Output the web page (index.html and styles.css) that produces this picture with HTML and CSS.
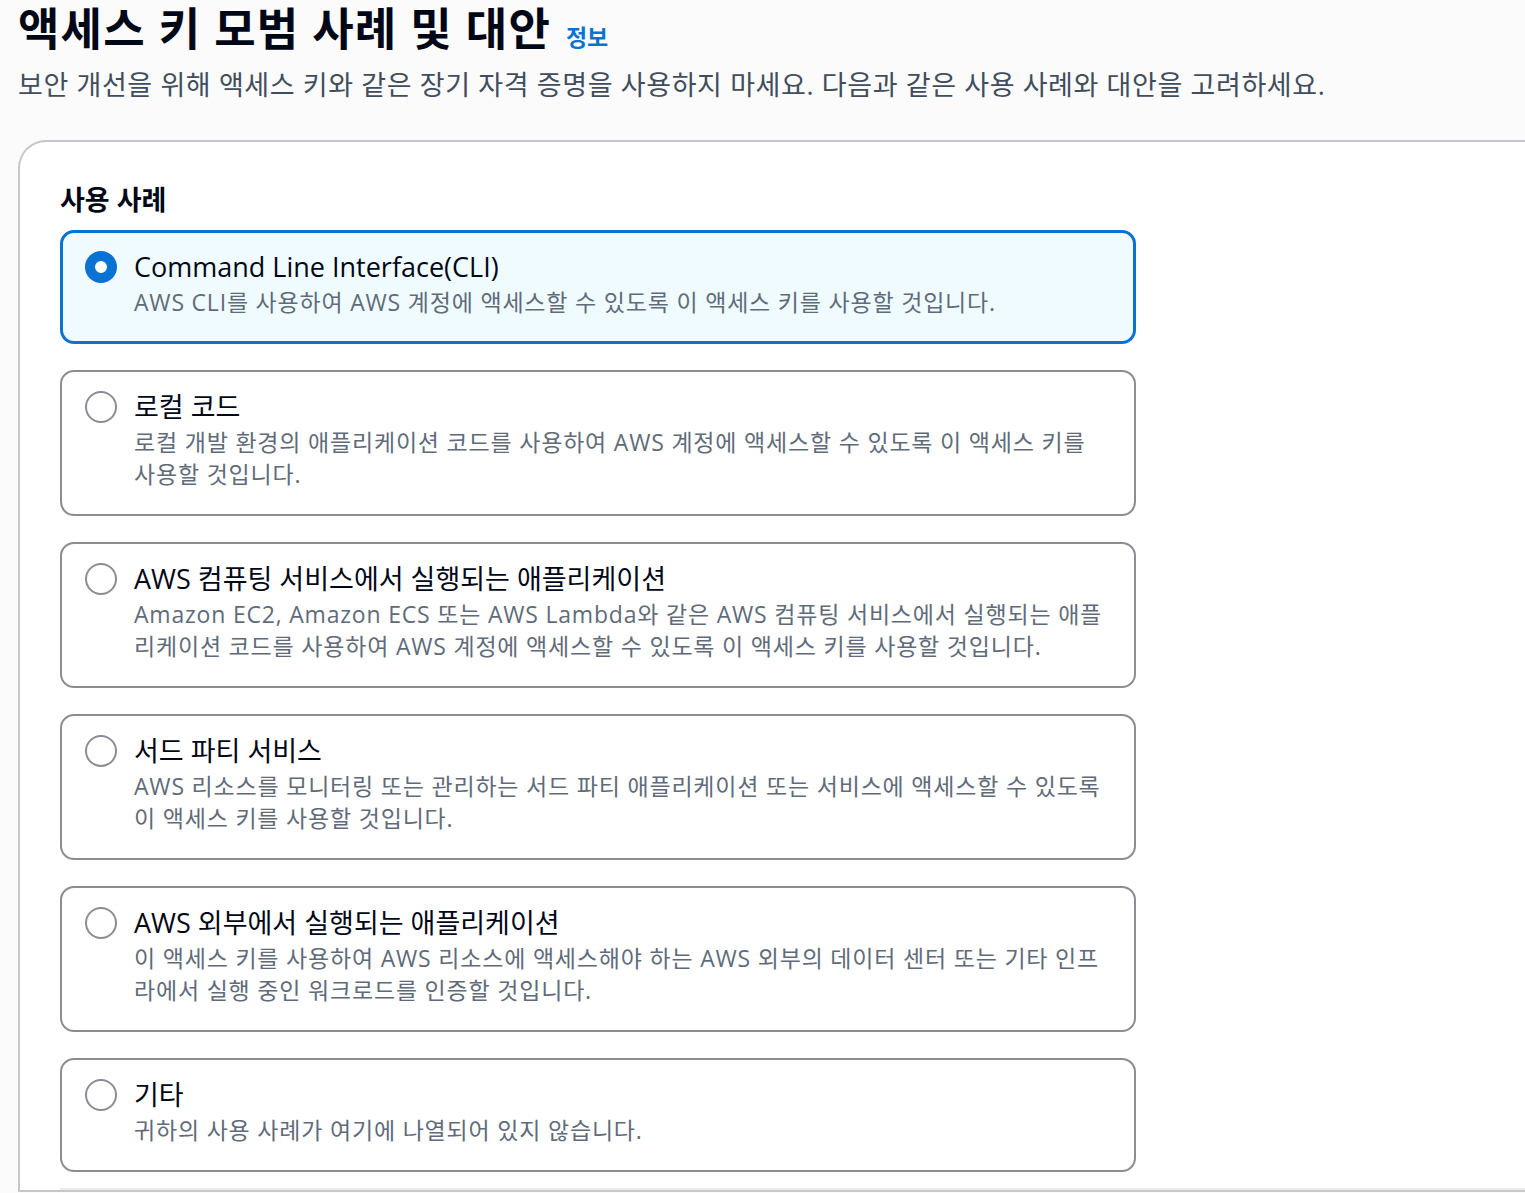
FILE: index.html
```html
<!DOCTYPE html>
<html lang="ko">
<head>
  <meta charset="UTF-8">
  <meta name="viewport" content="width=device-width, initial-scale=1.0">
  <title>액세스 키 모범 사례 및 대안</title>
  <link rel="stylesheet" href="styles.css">
</head>
<body>
  <div class="page">
    <header class="page-header">
      <h1>액세스 키 모범 사례 및 대안 <a href="#" class="info-link">정보</a></h1>
      <p class="subtitle">보안 개선을 위해 액세스 키와 같은 장기 자격 증명을 사용하지 마세요. 다음과 같은 사용 사례와 대안을 고려하세요.</p>
    </header>

    <section class="container">
      <h2>사용 사례</h2>
      <div class="tiles" role="radiogroup">
        <label class="tile selected">
          <span class="radio checked"></span>
          <span class="tile-text">
            <span class="tile-title">Command Line Interface(CLI)</span>
            <span class="tile-desc">AWS CLI를 사용하여 AWS 계정에 액세스할 수 있도록 이 액세스 키를 사용할 것입니다.</span>
          </span>
        </label>

        <label class="tile">
          <span class="radio"></span>
          <span class="tile-text">
            <span class="tile-title">로컬 코드</span>
            <span class="tile-desc">로컬 개발 환경의 애플리케이션 코드를 사용하여 AWS 계정에 액세스할 수 있도록 이 액세스 키를 사용할 것입니다.</span>
          </span>
        </label>

        <label class="tile">
          <span class="radio"></span>
          <span class="tile-text">
            <span class="tile-title">AWS 컴퓨팅 서비스에서 실행되는 애플리케이션</span>
            <span class="tile-desc">Amazon EC2, Amazon ECS 또는 AWS Lambda와 같은 AWS 컴퓨팅 서비스에서 실행되는 애플리케이션 코드를 사용하여 AWS 계정에 액세스할 수 있도록 이 액세스 키를 사용할 것입니다.</span>
          </span>
        </label>

        <label class="tile">
          <span class="radio"></span>
          <span class="tile-text">
            <span class="tile-title">서드 파티 서비스</span>
            <span class="tile-desc">AWS 리소스를 모니터링 또는 관리하는 서드 파티 애플리케이션 또는 서비스에 액세스할 수 있도록 이 액세스 키를 사용할 것입니다.</span>
          </span>
        </label>

        <label class="tile">
          <span class="radio"></span>
          <span class="tile-text">
            <span class="tile-title">AWS 외부에서 실행되는 애플리케이션</span>
            <span class="tile-desc">이 액세스 키를 사용하여 AWS 리소스에 액세스해야 하는 AWS 외부의 데이터 센터 또는 기타 인프라에서 실행 중인 워크로드를 인증할 것입니다.</span>
          </span>
        </label>

        <label class="tile">
          <span class="radio"></span>
          <span class="tile-text">
            <span class="tile-title">기타</span>
            <span class="tile-desc">귀하의 사용 사례가 여기에 나열되어 있지 않습니다.</span>
          </span>
        </label>
      </div>
      <div class="divider"></div>
    </section>
  </div>
</body>
</html>
```

FILE: styles.css
```css
html, body {
  margin: 0;
  padding: 0;
  overflow: hidden;
}

body {
  font-family: "Open Sans", "Noto Sans CJK KR", sans-serif;
  background-color: #fbfbfb;
  color: #000716;
}

.page {
  padding-left: 18px;
}

.page-header {
  padding-top: 2px;
}

.page-header h1 {
  margin: 0;
  font-size: 45px;
  line-height: 54px;
  font-weight: 700;
  letter-spacing: 1.2px;
}

.info-link {
  margin-left: 2px;
  font-size: 23px;
  font-weight: 700;
  color: #0972d3;
  text-decoration: none;
  letter-spacing: 0;
}

.subtitle {
  margin: 3px 0 0;
  font-size: 27px;
  line-height: 36px;
  letter-spacing: 0.6px;
  color: #414d5c;
}

.container {
  margin-top: 37px;
  width: 1700px;
  background: #ffffff;
  border: 2px solid #c6c6cd;
  border-right: none;
  border-radius: 28px 0 0 0;
  padding: 40px 0 0 40px;
}

.container h2 {
  margin: 0 0 12px;
  font-size: 27px;
  line-height: 36px;
  font-weight: 700;
}

.tiles {
  width: 1076px;
  display: flex;
  flex-direction: column;
  gap: 26px;
  padding-bottom: 16px;
}

.tile {
  display: flex;
  align-items: flex-start;
  gap: 17px;
  padding: 16px 23px 24px 23px;
  border: 2px solid #8c8c94;
  border-radius: 14px;
  background: #ffffff;
  cursor: pointer;
}

.tile.selected {
  border: 3px solid #0972d3;
  padding: 15px 22px 23px 22px;
  background: #f0fbff;
}

.radio {
  flex: none;
  box-sizing: border-box;
  width: 32px;
  height: 32px;
  margin-top: 3px;
  border: 2px solid #8c8c94;
  border-radius: 50%;
  background: #ffffff;
}

.radio.checked {
  border: 10px solid #0972d3;
}

.tile-text {
  display: flex;
  flex-direction: column;
}

.tile-title {
  font-size: 27px;
  line-height: 38px;
  color: #000716;
}

.tile-desc {
  font-size: 23px;
  line-height: 32px;
  letter-spacing: 0.8px;
  color: #5f6b7a;
}

.divider {
  height: 2px;
  background: #e9ebed;
}
```
